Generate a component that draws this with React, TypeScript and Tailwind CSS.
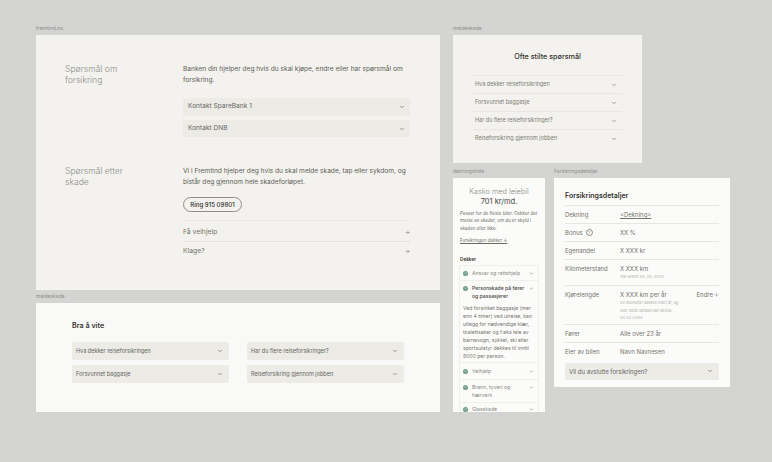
import { ArrowRight, Check, ChevronDown, ChevronUp, ArrowDown } from "lucide-react";

const Frame = ({ label, className, children }: { label: string; className: string; children: React.ReactNode }) => (
  <section className="flex flex-col">
    <p className="h-[10px] text-[5px] leading-[6px] text-[#8e8e8a]">{label}</p>
    <div className={className}>{children}</div>
  </section>
);

const Accordion = ({ title, className, size = "text-[6.6px]" }: { title: string; className: string; size?: string }) => (
  <div className={`flex items-center justify-between rounded-[2px] bg-[#ecebe6] text-[#66665f] ${size} ${className}`}>
    <span>{title}</span>
    <ChevronDown size={6} strokeWidth={2} className="text-[#44443f]" />
  </div>
);

const FaqRow = ({ title }: { title: string }) => (
  <div className="flex h-[18px] items-center justify-between border-t border-[#e8e7e2] pl-[2px] pr-[5px] text-[5.5px] text-[#7c7c75]">
    <span>{title}</span>
    <ChevronDown size={6} strokeWidth={2} className="text-[#55554f]" />
  </div>
);

const CoverItem = ({ title, open }: { title: React.ReactNode; open?: boolean }) => (
  <div className="flex items-start justify-between pl-[3px] pr-[4px]">
    <div className="flex items-start gap-[4px]">
      <span className="mt-[1.5px] flex h-[5px] w-[5px] shrink-0 items-center justify-center rounded-full bg-[#6d9a88]">
        <Check size={4} strokeWidth={3} className="text-white" />
      </span>
      <span className={`w-[56px] leading-[8px] ${open ? "font-medium text-[#45453f]" : "text-[#8a8a83]"}`}>{title}</span>
    </div>
    {open ? (
      <ChevronUp size={5} strokeWidth={2} className="mt-[1.5px] text-[#55554f]" />
    ) : (
      <ChevronDown size={5} strokeWidth={2} className="mt-[1.5px] text-[#55554f]" />
    )}
  </div>
);

const DetailRow = ({ label, children, extra }: { label: React.ReactNode; children: React.ReactNode; extra?: React.ReactNode }) => (
  <div className="flex border-t border-[#e6e6e2] py-[4px]">
    <div className="w-[55px] shrink-0 text-[#74746d]">{label}</div>
    <div className="flex-1 text-[#74746d]">{children}</div>
    {extra}
  </div>
);

export default function App() {
  return (
    <div className="flex h-[462px] w-[772px] gap-[13px] overflow-hidden bg-[#d4d4d2] pl-[36px] pt-[25px] [font-family:Inter,'Liberation_Sans',sans-serif]">
      <div className="flex w-[404px] flex-col gap-[3px]">
        <Frame label="fremtind.no" className="h-[255px] bg-[#f3f2ee] pl-[29px] pr-[30px] pt-[29px]">
          <div className="flex">
            <h2 className="w-[118px] text-[8.6px] font-light leading-[11px] text-[#8d8d87]">
              Spørsmål om
              <br />
              forsikring
            </h2>
            <div className="flex-1">
              <p className="text-[6.6px] leading-[11px] text-[#5c5c56]">
                Banken din hjelper deg hvis du skal kjøpe, endre eller har spørsmål om forsikring.
              </p>
              <Accordion title="Kontakt SpareBank 1" className="mt-[12px] h-[18px] px-[5px]" />
              <Accordion title="Kontakt DNB" className="mt-[4px] h-[17px] px-[5px]" />
            </div>
          </div>
          <div className="mt-[29px] flex">
            <h2 className="w-[118px] text-[8.6px] font-light leading-[11px] text-[#8d8d87]">
              Spørsmål etter
              <br />
              skade
            </h2>
            <div className="flex-1">
              <p className="text-[6.6px] leading-[11px] text-[#5c5c56]">
                Vi i Fremtind hjelper deg hvis du skal melde skade, tap eller sykdom, og bistår deg gjennom hele skadeforløpet.
              </p>
              <button className="mt-[9px] flex h-[15px] w-[59px] items-center justify-center rounded-full border border-[#8f8f88] text-[6.1px] font-medium text-[#2e2e2a]">
                Ring 915 09801
              </button>
              <div className="mt-[8px] flex h-[21px] items-center justify-between border-t border-[#e9e8e3] pt-[2px] text-[6.8px] text-[#74746d]">
                <span>Få veihjelp</span>
                <ArrowRight size={5} className="text-[#55554f]" />
              </div>
              <div className="flex h-[19px] items-center justify-between border-t border-[#e3e2dd] text-[6.8px] text-[#74746d]">
                <span>Klage?</span>
                <ArrowRight size={5} className="text-[#55554f]" />
              </div>
            </div>
          </div>
        </Frame>
        <Frame label="meldeskade" className="h-[109px] bg-[#f9f9f7] px-[36px] pt-[18px]">
          <h3 className="text-[7.2px] font-semibold leading-[10px] text-[#33332f]">Bra å vite</h3>
          <div className="mt-[11px] grid grid-cols-2 gap-x-[18px] gap-y-[5px]">
            <Accordion title="Hva dekker reiseforsikringen" size="text-[5.5px]" className="h-[18px] pl-[4px] pr-[6px]" />
            <Accordion title="Har du flere reiseforsikringer?" size="text-[5.5px]" className="h-[18px] pl-[4px] pr-[6px]" />
            <Accordion title="Forsvunnet baggasje" size="text-[5.5px]" className="h-[18px] pl-[4px] pr-[6px]" />
            <Accordion title="Reiseforsikring gjennom jobben" size="text-[5.5px]" className="h-[18px] pl-[4px] pr-[6px]" />
          </div>
        </Frame>
      </div>

      <div className="flex flex-col">
        <Frame label="meldeskade" className="h-[128px] w-[189px] bg-[#f3f2ee] px-[20px] pt-[16px]">
          <h3 className="text-center text-[7.2px] font-medium leading-[11px] text-[#33332f]">Ofte stilte spørsmål</h3>
          <div className="mt-[13px]">
            <FaqRow title="Hva dekker reiseforsikringen" />
            <FaqRow title="Forsvunnet baggasje" />
            <FaqRow title="Har du flere reiseforsikringer?" />
            <FaqRow title="Reiseforsikring gjennom jobben" />
          </div>
        </Frame>
        <div className="mt-[5px] flex items-start gap-[9px]">
          <Frame label="dekningsliste" className="h-[234px] w-[92px] overflow-hidden bg-[#fbfbfa] px-[7px] pt-[9px]">
            <h3 className="text-center text-[7.3px] font-light leading-[9.5px] text-[#8d8d87]">Kasko med leiebil</h3>
            <p className="text-center text-[7.5px] leading-[9.5px] text-[#44443f]">701 kr/md.</p>
            <p className="mt-[4px] text-[4.5px] leading-[7.4px] text-[#6b6b65]">
              Passer for de fleste biler. Dekker det meste av skader, om du er skyld i skaden eller ikke.
            </p>
            <p className="mt-[5px] text-[4.5px] leading-[7px] text-[#6b6b65] underline">Forsikringen dekker ↓</p>
            <p className="mt-[12px] text-[4.7px] font-semibold leading-[7px] text-[#33332f]">Dekker</p>
            <div className="-mx-[1px] mt-[2px] border border-b-0 border-[#efefec] text-[5.1px]">
              <div className="border-b border-[#efefec] py-[3px]">
                <CoverItem title="Ansvar og rettshjelp" />
              </div>
              <div className="border-b border-[#efefec] pt-[3px]">
                <CoverItem open title="Personskade på fører og passasjerer" />
                <p className="px-[3px] pb-[2px] pt-[4px] text-[5.1px] leading-[8px] text-[#74746d]">
                  Ved forsinket baggasje (mer enn 4 timer) ved utreise, kan utlegg for nødvendige klær, toalettsaker og f.eks leie av barnevogn, sykkel, ski eller sportsutstyr dekkes til inntil 5000 per person.
                </p>
              </div>
              <div className="border-b border-[#efefec] py-[4px]">
                <CoverItem title="Veihjelp" />
              </div>
              <div className="border-b border-[#efefec] py-[3px]">
                <CoverItem title="Brann, tyveri og hærverk" />
              </div>
              <div className="pt-[2px]">
                <CoverItem title="Glasskade" />
              </div>
            </div>
          </Frame>
          <Frame label="Forsikringsdetaljer" className="h-[209px] w-[176px] bg-[#fbfbfa] px-[11px] pt-[13px] text-[6px] leading-[9px]">
            <h3 className="text-[7px] font-semibold leading-[10px] text-[#33332f]">Forsikringsdetaljer</h3>
            <div className="mt-[4px]">
              <DetailRow label="Dekning">
                <span className="underline">&lt;Dekning&gt;</span>
              </DetailRow>
              <DetailRow
                label={
                  <span className="flex items-center gap-[3px]">
                    Bonus
                    <span className="flex h-[7px] w-[7px] items-center justify-center rounded-full border-[0.5px] border-[#8a8a83] text-[4px] leading-none">?</span>
                  </span>
                }
              >
                XX %
              </DetailRow>
              <DetailRow label="Egenandel">X XXX kr</DetailRow>
              <DetailRow label="Kilometerstand">
                X XXX km
                <p className="text-[3.8px] leading-[8px] text-[#b0b0aa]">Sist avlest XX. XX. XXXX</p>
              </DetailRow>
              <DetailRow label="Kjørelengde" extra={<span className="flex items-start gap-[1px] text-[#74746d]">Endre <ArrowDown size={5} className="mt-[2px]" /></span>}>
                X XXX km per år
                <p className="-mb-[2px] w-[60px] text-[3.8px] leading-[7.5px] text-[#b0b0aa]">
                  XX kilometer dekkes hvert år, og over dette betales det ekstra. XX.XX.XXXX
                </p>
              </DetailRow>
              <DetailRow label="Fører">Alle over 23 år</DetailRow>
              <DetailRow label="Eier av bilen">Navn Navnesen</DetailRow>
              <Accordion title="Vil du avslutte forsikringen?" size="text-[6px]" className="mt-[3px] h-[17px] pl-[4px] pr-[6px]" />
            </div>
          </Frame>
        </div>
      </div>
    </div>
  );
}
